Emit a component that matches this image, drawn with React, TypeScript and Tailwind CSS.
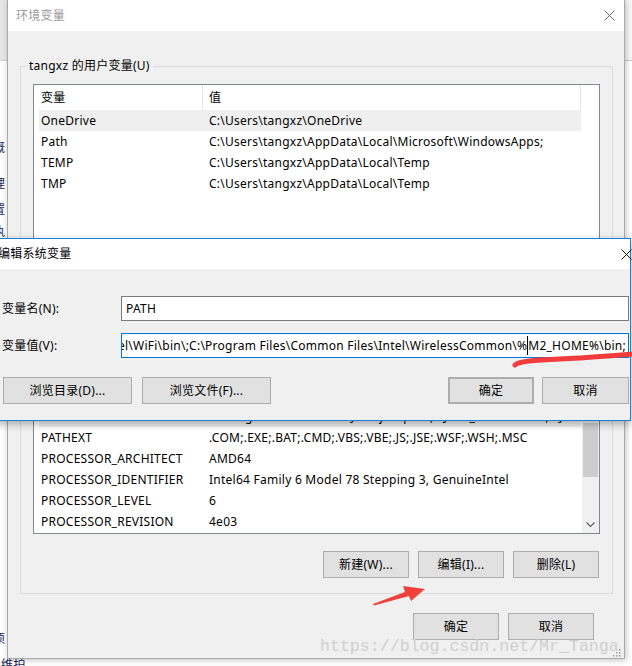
import React from "react";

type Var = { name: string; value: string; selected?: boolean };

const userVars: Var[] = [
  { name: "OneDrive", value: "C:\\Users\\tangxz\\OneDrive", selected: true },
  { name: "Path", value: "C:\\Users\\tangxz\\AppData\\Local\\Microsoft\\WindowsApps;" },
  { name: "TEMP", value: "C:\\Users\\tangxz\\AppData\\Local\\Temp" },
  { name: "TMP", value: "C:\\Users\\tangxz\\AppData\\Local\\Temp" },
];

// first two rows sit under the edit dialog, so they carry no text
const sysVars: Var[] = [
  { name: "", value: "" },
  { name: "", value: "" },
  {
    name: "Path",
    value: "C:\\ProgramData\\Oracle\\Java\\javapath;%JAVA_HOME%\\bin;%JAVA_HOME%\\jre\\bin;%SystemRoot%\\system32;",
    selected: true,
  },
  { name: "PATHEXT", value: ".COM;.EXE;.BAT;.CMD;.VBS;.VBE;.JS;.JSE;.WSF;.WSH;.MSC" },
  { name: "PROCESSOR_ARCHITECT", value: "AMD64" },
  { name: "PROCESSOR_IDENTIFIER", value: "Intel64 Family 6 Model 78 Stepping 3, GenuineIntel" },
  { name: "PROCESSOR_LEVEL", value: "6" },
  { name: "PROCESSOR_REVISION", value: "4e03" },
];

const CloseIcon = ({ className = "" }: { className?: string }) => (
  <svg width="11" height="11" viewBox="0 0 11 11" className={className}>
    <path d="M0.5 0.5L10.5 10.5M10.5 0.5L0.5 10.5" stroke="currentColor" strokeWidth="1" fill="none" />
  </svg>
);

const Btn = ({ label, className = "" }: { label: string; className?: string }) => (
  <button
    className={`h-[27px] flex items-center justify-center bg-[#e1e1e1] border border-[#adadad] text-[12px] text-black ${className}`}
  >
    {label}
  </button>
);

const Header = ({ cols }: { cols: [string, string] }) => (
  <div className="flex h-[25px] w-[542px] bg-white shrink-0">
    <div className="w-[164px] pl-[2px] flex items-center border-r border-[#e5e5e5]">{cols[0]}</div>
    <div className="flex-1 pl-[6px] flex items-center border-r border-[#e5e5e5]">{cols[1]}</div>
  </div>
);

const VarRow = ({ v }: { v: Var }) => (
  <div className={`flex h-[21px] shrink-0 items-center w-[542px] whitespace-nowrap ${v.selected ? "bg-[#efefef]" : ""}`}>
    <span className="w-[164px] pl-[2px] overflow-hidden">{v.name}</span>
    <span className="flex-1 pl-[6px] overflow-hidden">{v.value}</span>
  </div>
);

const ListBox = ({
  rows,
  cols,
  scroll,
  className,
}: {
  rows: Var[];
  cols: [string, string];
  scroll?: boolean;
  className: string;
}) => (
  <div className={`bg-white border border-[#828790] flex pl-[5px] overflow-hidden text-[12px] text-black ${className}`}>
    <div className="flex flex-col w-[542px]">
      <Header cols={cols} />
      {rows.map((v, i) => (
        <VarRow key={i} v={v} />
      ))}
    </div>
    {scroll && (
      <div className="ml-[1px] w-[17px] bg-[#f0f0f0] flex flex-col">
        <div className="h-[17px]" />
        <div className="flex-1">
          <div className="mt-[67px] mx-[1px] h-[54px] bg-[#cdcdcd]" />
        </div>
        <div className="h-[17px] flex items-center justify-center">
          <svg width="9" height="6" viewBox="0 0 9 6">
            <path d="M0.5 0.5L4.5 4.5L8.5 0.5" stroke="#606060" strokeWidth="1.2" fill="none" />
          </svg>
        </div>
      </div>
    )}
  </div>
);

const Group = ({ title, className = "", children }: { title: string; className?: string; children: React.ReactNode }) => (
  <fieldset className={`border border-[#dcdcdc] px-[12px] ${className}`}>
    <legend className="ml-[-7px] px-[3px] h-[16px] text-[12px] leading-[16px] text-black">{title}</legend>
    {children}
  </fieldset>
);

export default function App() {
  return (
    <div className="relative w-[632px] h-[666px] overflow-hidden bg-white tracking-[0.25px] font-['Noto_Sans','Noto_Sans_CJK_SC',sans-serif]">
      {/* window behind */}
      <div className="absolute inset-0 flex flex-col">
        <div className="h-[61px] shrink-0 flex border-b border-[#cfcfcf]">
          <div className="w-[7px] bg-[#e6e6e6]" />
          <div className="flex-1 bg-[#f7f7f7]" />
        </div>
        <div className="flex flex-col shrink-0 ml-[-7px] text-[12px] leading-[14px] text-[#23265a]">
          <span className="mt-[80px]">概</span>
          <span className="mt-[22px]">理</span>
          <span className="mt-[12px]">置</span>
          <span className="mt-[8px]">执</span>
          <span className="mt-[393px]">须</span>
          <span className="mt-[12px] ml-[8px]">维护</span>
        </div>
      </div>

      {/* 环境变量 */}
      <div className="absolute left-[7px] top-[-1px] w-[618px] h-[660px] border border-[#aaaaaa] bg-[#f0f0f0] flex flex-col shadow-[1px_1px_6px_rgba(0,0,0,0.25)]">
        <div className="h-[31px] shrink-0 bg-white flex items-center justify-between pl-[8px] pr-[9px]">
          <span className="text-[12px] text-[#9a9a9a]">环境变量</span>
          <CloseIcon className="text-[#6f6f6f]" />
        </div>
        <div className="flex flex-col pl-[12px] pr-[11px]">
          <Group title="tangxz 的用户变量(U)" className="mt-[27px] pt-[10px] pb-[12px]">
            <ListBox rows={userVars} cols={["变量", "值"]} className="h-[180px]" />
          </Group>
          <Group title="" className="mt-[35px] pt-[10px] pb-[15px]">
            <ListBox rows={sysVars} cols={["", ""]} scroll className="h-[196px]" />
            <div className="flex justify-end gap-[9px] mt-[17px] pr-[1px]">
              <Btn label="新建(W)..." className="w-[86px]" />
              <Btn label="编辑(I)..." className="w-[86px]" />
              <Btn label="删除(L)" className="w-[86px]" />
            </div>
          </Group>
          <div className="flex justify-end gap-[9px] mt-[19px] pr-[19px]">
            <Btn label="确定" className="w-[86px]" />
            <Btn label="取消" className="w-[86px]" />
          </div>
        </div>
        <svg width="9" height="9" viewBox="0 0 9 9" className="absolute right-[3px] bottom-[1px]">
          {[
            [7, 1],
            [7, 4],
            [4, 4],
            [7, 7],
            [4, 7],
            [1, 7],
          ].map(([x, y]) => (
            <rect key={`${x}-${y}`} x={x} y={y} width="1.5" height="1.5" fill="#a0a0a0" />
          ))}
        </svg>
      </div>

      {/* 编辑系统变量 */}
      <div className="absolute left-[-10px] top-[238px] w-[641px] h-[183px] border border-[#1b7fd6] bg-[#f0f0f0] flex flex-col shadow-[0_3px_8px_rgba(0,0,0,0.3)] text-[12px] text-black">
        <div className="h-[30px] shrink-0 bg-white flex items-center justify-between pl-[7px]">
          <span>编辑系统变量</span>
          <CloseIcon className="text-[#111] -mr-[2px]" />
        </div>
        <div className="flex flex-col pl-[11px] pr-[1px] pt-[27px]">
          <div className="flex items-center h-[25px]">
            <span className="w-[119px]">变量名(N):</span>
            <div className="flex-1 h-full bg-white border border-[#7a7a7a] flex items-center pl-[4px]">PATH</div>
          </div>
          <div className="flex items-center h-[25px] mt-[12px]">
            <span className="w-[119px]">变量值(V):</span>
            <div className="flex-1 h-full bg-white border border-[#0078d7] flex items-center justify-end overflow-hidden whitespace-nowrap pr-[2px]">
              <span>ntel\WiFi\bin\;C:\Program Files\Common Files\Intel\WirelessCommon\%</span>
              <span className="h-[19px] border-l border-black" />
              <span>M2_HOME%\bin;</span>
            </div>
          </div>
          <div className="flex items-center justify-between mt-[19px]">
            <div className="flex gap-[10px] ml-[1px]">
              <Btn label="浏览目录(D)..." className="w-[129px]" />
              <Btn label="浏览文件(F)..." className="w-[129px]" />
            </div>
            <div className="flex gap-[8px]">
              <Btn label="确定" className="w-[86px] border-2 border-[#0078d7]" />
              <Btn label="取消" className="w-[87px]" />
            </div>
          </div>
        </div>
      </div>

      {/* annotations */}
      <svg width="632" height="666" viewBox="0 0 632 666" className="absolute left-0 top-0 pointer-events-none">
        <path
          d="M515 365 C518 361 535 360 560 359 C585 358 605 356 634 354"
          stroke="#f23b3b"
          strokeWidth="5"
          strokeLinecap="round"
          fill="none"
        />
        <polygon points="373,604 405,592 403,586 425,589 411,601 409,596 374,605.5" fill="#f2403a" />
      </svg>
      <div className="absolute left-[320px] top-[637px] text-[16.6px] leading-[20px] tracking-normal text-[#cfcfcf] font-['Liberation_Mono',monospace] whitespace-nowrap">
        https://blog.csdn.net/Mr_Tanga
      </div>
    </div>
  );
}
